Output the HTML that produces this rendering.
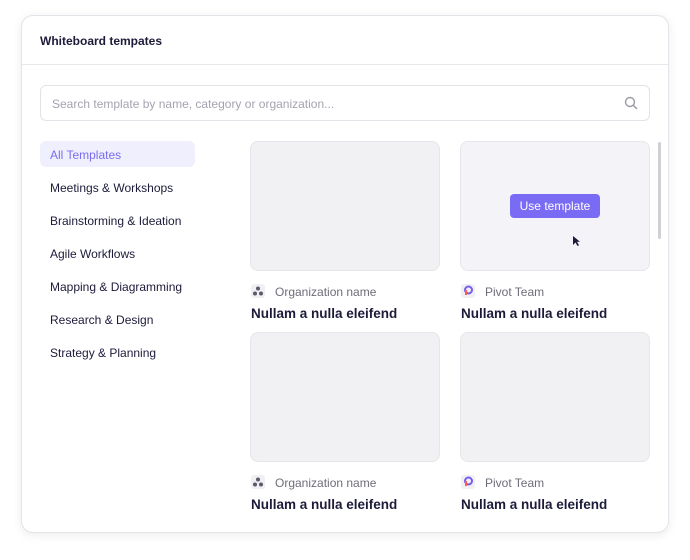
<!DOCTYPE html>
<html><head><style>
*{box-sizing:border-box;margin:0;padding:0}
body{width:690px;height:560px;background:#fff;font-family:"Liberation Sans",sans-serif;position:relative;overflow:hidden}
.modal{position:absolute;left:21px;top:15px;width:648px;height:518px;border:1px solid #e4e4ea;border-radius:12px;background:#fff;box-shadow:0 2px 10px rgba(0,0,0,0.08)}
.hdr{position:absolute;left:18px;top:18px;font-size:12px;font-weight:bold;color:#1c1b3a}
.line{position:absolute;left:0;right:0;top:48px;border-top:1px solid #e8e8ec}
.search{position:absolute;left:18px;top:69px;width:610px;height:36px;border:1px solid #e2e2e8;border-radius:6px;font-size:12px;color:#a4a4b0;padding:11px 11px}
.side{position:absolute;left:18px;font-size:12px;color:#1c1b3a;height:26px;width:155px;padding:7px 10px;border-radius:6px}
.side.a{background:#f0effd;color:#7b6cf0}
.card{position:absolute;width:190px;height:130px;background:#f1f1f4;border:1px solid #e6e6ea;border-radius:8px}
.org{position:absolute;font-size:12px;color:#6e6e7a;padding-left:24px}
.title{position:absolute;font-size:13.5px;font-weight:bold;color:#1c1b3a}
.btn{position:absolute;left:49px;top:52px;width:90px;height:24px;background:#7a6bf5;color:#fff;border-radius:4px;font-size:12px;text-align:center;line-height:24px}
.ic{position:absolute;left:0;top:-1px;width:14px;height:14px}
</style></head><body>
<div class="modal">
<div class="hdr">Whiteboard tempates</div>
<div class="line"></div>
<div class="search">Search template by name, category or organization...
<svg style="position:absolute;right:11px;top:10px" width="14" height="14" viewBox="0 0 14 14"><circle cx="6" cy="6" r="4.5" fill="none" stroke="#9a9aa6" stroke-width="1.4"/><path d="M9.5 9.5L13 13" stroke="#9a9aa6" stroke-width="1.4"/></svg></div>
<div class="side a" style="top:125px">All Templates</div>
<div class="side" style="top:158px">Meetings &amp; Workshops</div>
<div class="side" style="top:191px">Brainstorming &amp; Ideation</div>
<div class="side" style="top:224px">Agile Workflows</div>
<div class="side" style="top:257px">Mapping &amp; Diagramming</div>
<div class="side" style="top:290px">Research &amp; Design</div>
<div class="side" style="top:323px">Strategy &amp; Planning</div>
<div class="card" style="left:228px;top:125px"></div>
<div class="card" style="left:438px;top:125px;background:#f4f4f8"><div class="btn">Use template</div>
<svg style="position:absolute;left:111px;top:93px" width="9" height="12" viewBox="0 0 9 12"><path d="M1 1v9l2.5-2.5 2 3.5 1.5-.8-2-3.4H8z" fill="#1c1b3a"/></svg></div>
<div class="card" style="left:228px;top:316px"></div>
<div class="card" style="left:438px;top:316px"></div>
<div style="position:absolute;left:636px;top:126px;width:3px;height:97px;background:#cfcfd6;border-radius:2px"></div>
<div class="org" style="left:229px;top:269px"><svg class="ic" viewBox="0 0 14 14"><rect width="14" height="14" rx="3" fill="#f0f0f4"/><circle cx="7" cy="4.5" r="2" fill="#5a5a6a"/><circle cx="4" cy="9.5" r="2" fill="#5a5a6a"/><circle cx="10" cy="9.5" r="2" fill="#5a5a6a"/></svg>Organization name</div>
<div class="org" style="left:439px;top:269px"><svg class="ic" viewBox="0 0 14 14"><rect width="14" height="14" rx="3" fill="#f0f0f4"/><circle cx="7.5" cy="6" r="3.5" fill="none" stroke="#7a5cf0" stroke-width="2"/><rect x="4" y="6" width="2" height="5" fill="#ff5a4a"/></svg>Pivot Team</div>
<div class="title" style="left:229px;top:290px">Nullam a nulla eleifend</div>
<div class="title" style="left:439px;top:290px">Nullam a nulla eleifend</div>
<div class="org" style="left:229px;top:460px"><svg class="ic" viewBox="0 0 14 14"><rect width="14" height="14" rx="3" fill="#f0f0f4"/><circle cx="7" cy="4.5" r="2" fill="#5a5a6a"/><circle cx="4" cy="9.5" r="2" fill="#5a5a6a"/><circle cx="10" cy="9.5" r="2" fill="#5a5a6a"/></svg>Organization name</div>
<div class="org" style="left:439px;top:460px"><svg class="ic" viewBox="0 0 14 14"><rect width="14" height="14" rx="3" fill="#f0f0f4"/><circle cx="7.5" cy="6" r="3.5" fill="none" stroke="#7a5cf0" stroke-width="2"/><rect x="4" y="6" width="2" height="5" fill="#ff5a4a"/></svg>Pivot Team</div>
<div class="title" style="left:229px;top:481px">Nullam a nulla eleifend</div>
<div class="title" style="left:439px;top:481px">Nullam a nulla eleifend</div>
</div>
</body></html>
